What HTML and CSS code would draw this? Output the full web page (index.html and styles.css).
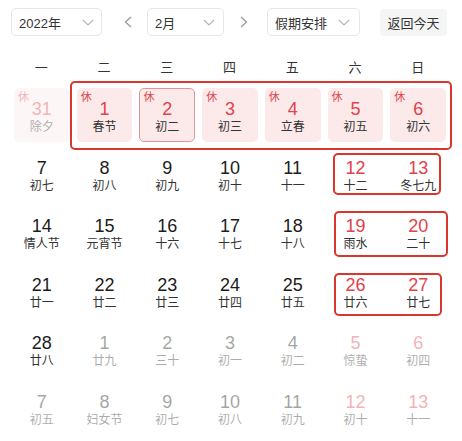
FILE: index.html
```html
<!DOCTYPE html>
<html lang="zh">
<head>
<meta charset="utf-8">
<title>日历</title>
<link rel="stylesheet" href="styles.css">
</head>
<body>
<div class="page">
  <div class="toolbar">
    <div class="select select-year"><span>2022年</span><svg class="caret" width="12" height="7" viewBox="0 0 12 7"><polyline points="1,1 6,6 11,1"/></svg></div>
    <div class="nav nav-prev"><svg width="8" height="12" viewBox="0 0 8 12"><polyline points="7,1 1.5,6 7,11"/></svg></div>
    <div class="select select-month"><span>2月</span><svg class="caret" width="12" height="7" viewBox="0 0 12 7"><polyline points="1,1 6,6 11,1"/></svg></div>
    <div class="nav nav-next"><svg width="8" height="12" viewBox="0 0 8 12"><polyline points="1,1 6.5,6 1,11"/></svg></div>
    <div class="select select-holiday"><span>假期安排</span><svg class="caret" width="12" height="7" viewBox="0 0 12 7"><polyline points="1,1 6,6 11,1"/></svg></div>
    <div class="today">返回今天</div>
  </div>

  <div class="weekdays">
    <span>一</span><span>二</span><span>三</span><span>四</span><span>五</span><span>六</span><span>日</span>
  </div>

  <div class="grid">
    <div class="day rest other"><i>休</i><b>31</b><em>除夕</em></div>
    <div class="day rest"><i>休</i><b>1</b><em>春节</em></div>
    <div class="day rest selected"><i>休</i><b>2</b><em>初二</em></div>
    <div class="day rest"><i>休</i><b>3</b><em>初三</em></div>
    <div class="day rest"><i>休</i><b>4</b><em>立春</em></div>
    <div class="day rest"><i>休</i><b>5</b><em>初五</em></div>
    <div class="day rest"><i>休</i><b>6</b><em>初六</em></div>

    <div class="day"><b>7</b><em>初七</em></div>
    <div class="day"><b>8</b><em>初八</em></div>
    <div class="day"><b>9</b><em>初九</em></div>
    <div class="day"><b>10</b><em>初十</em></div>
    <div class="day"><b>11</b><em>十一</em></div>
    <div class="day weekend"><b>12</b><em>十二</em></div>
    <div class="day weekend"><b>13</b><em>冬七九</em></div>

    <div class="day"><b>14</b><em>情人节</em></div>
    <div class="day"><b>15</b><em>元宵节</em></div>
    <div class="day"><b>16</b><em>十六</em></div>
    <div class="day"><b>17</b><em>十七</em></div>
    <div class="day"><b>18</b><em>十八</em></div>
    <div class="day weekend"><b>19</b><em>雨水</em></div>
    <div class="day weekend"><b>20</b><em>二十</em></div>

    <div class="day"><b>21</b><em>廿一</em></div>
    <div class="day"><b>22</b><em>廿二</em></div>
    <div class="day"><b>23</b><em>廿三</em></div>
    <div class="day"><b>24</b><em>廿四</em></div>
    <div class="day"><b>25</b><em>廿五</em></div>
    <div class="day weekend"><b>26</b><em>廿六</em></div>
    <div class="day weekend"><b>27</b><em>廿七</em></div>

    <div class="day"><b>28</b><em>廿八</em></div>
    <div class="day other"><b>1</b><em>廿九</em></div>
    <div class="day other"><b>2</b><em>三十</em></div>
    <div class="day other"><b>3</b><em>初一</em></div>
    <div class="day other"><b>4</b><em>初二</em></div>
    <div class="day other weekend"><b>5</b><em>惊蛰</em></div>
    <div class="day other weekend"><b>6</b><em>初四</em></div>

    <div class="day other"><b>7</b><em>初五</em></div>
    <div class="day other"><b>8</b><em>妇女节</em></div>
    <div class="day other"><b>9</b><em>初七</em></div>
    <div class="day other"><b>10</b><em>初八</em></div>
    <div class="day other"><b>11</b><em>初九</em></div>
    <div class="day other weekend"><b>12</b><em>初十</em></div>
    <div class="day other weekend"><b>13</b><em>十一</em></div>
  </div>

  <div class="mark mark-1"></div>
  <div class="mark mark-2"></div>
  <div class="mark mark-3"></div>
  <div class="mark mark-4"></div>
</div>
</body>
</html>
```

FILE: styles.css
```css
html, body {
  margin: 0;
  padding: 0;
  background: #ffffff;
}

.page {
  position: relative;
  width: 462px;
  height: 441px;
  overflow: hidden;
  padding-top: 8px;
  box-sizing: border-box;
  font-family: "Liberation Sans", "Noto Sans CJK SC", sans-serif;
  color: #222;
}

/* toolbar */
.toolbar {
  display: flex;
  align-items: center;
  height: 28px;
  padding-left: 11px;
}

.select {
  height: 28px;
  box-sizing: border-box;
  border: 1px solid #e6e6e6;
  border-radius: 5px;
  display: flex;
  align-items: center;
  justify-content: space-between;
  padding: 0 7px 0 7px;
  font-size: 13px;
  color: #333;
}

.select-year { width: 91px; }
.select-month { width: 77px; margin-left: 9px; padding-right: 8px; }
.select-holiday { width: 93px; margin-left: 13px; padding-right: 9px; }

.caret polyline {
  fill: none;
  stroke: #b5b5b5;
  stroke-width: 1.2;
}

.nav {
  width: 21px;
  height: 28px;
  display: flex;
  align-items: center;
  justify-content: center;
}
.nav-prev { margin-left: 15px; }
.nav-next { margin-left: 9px; }
.nav polyline {
  fill: none;
  stroke: #9a9a9a;
  stroke-width: 1.3;
}

.today {
  margin-left: 20px;
  width: 67px;
  height: 27px;
  border-radius: 4px;
  background: #f5f5f5;
  font-size: 13px;
  color: #333;
  display: flex;
  align-items: center;
  justify-content: center;
}

/* weekdays */
.weekdays {
  margin-top: 22px;
  display: grid;
  grid-template-columns: repeat(7, 1fr);
  width: 439px;
  margin-left: 10px;
  height: 20px;
  line-height: 20px;
  font-size: 13px;
  color: #333;
  text-align: center;
}

/* grid */
.grid {
  margin-top: 10px;
  margin-left: 10px;
  width: 439px;
  display: grid;
  grid-template-columns: repeat(7, 1fr);
  grid-auto-rows: 58.5px;
}

.day {
  position: relative;
  height: 54px;
  margin: 0 3px 0 4px;
  border-radius: 5px;
  box-sizing: border-box;
  padding-top: 12px;
  display: flex;
  flex-direction: column;
  align-items: center;
  text-align: center;
}

.day b {
  font-weight: normal;
  font-size: 18px;
  line-height: 18px;
  color: #1c1c1c;
}

.day em {
  font-style: normal;
  font-size: 12px;
  line-height: 18px;
  color: #333;
}

.day i {
  position: absolute;
  left: 4px;
  top: 3px;
  font-style: normal;
  font-size: 11px;
  line-height: 12px;
  color: #e0474e;
}

.rest {
  background: #fce9ea;
}
.rest b,
.weekend b {
  color: #e2424a;
}

.selected {
  border: 1px solid #e39499;
  padding-top: 11px;
}
.selected i {
  left: 3px;
  top: 2px;
}

.other {
  opacity: 0.4;
}

/* annotation boxes */
.mark {
  position: absolute;
  border: 2.5px solid #d9362e;
  border-radius: 5px;
  box-sizing: border-box;
}
.mark-1 { left: 70px; top: 81px; width: 382px; height: 69px; }
.mark-2 { left: 333px; top: 153px; width: 108px; height: 42px; }
.mark-3 { left: 334px; top: 211px; width: 114px; height: 46px; }
.mark-4 { left: 334px; top: 273px; width: 108px; height: 43px; }
```
